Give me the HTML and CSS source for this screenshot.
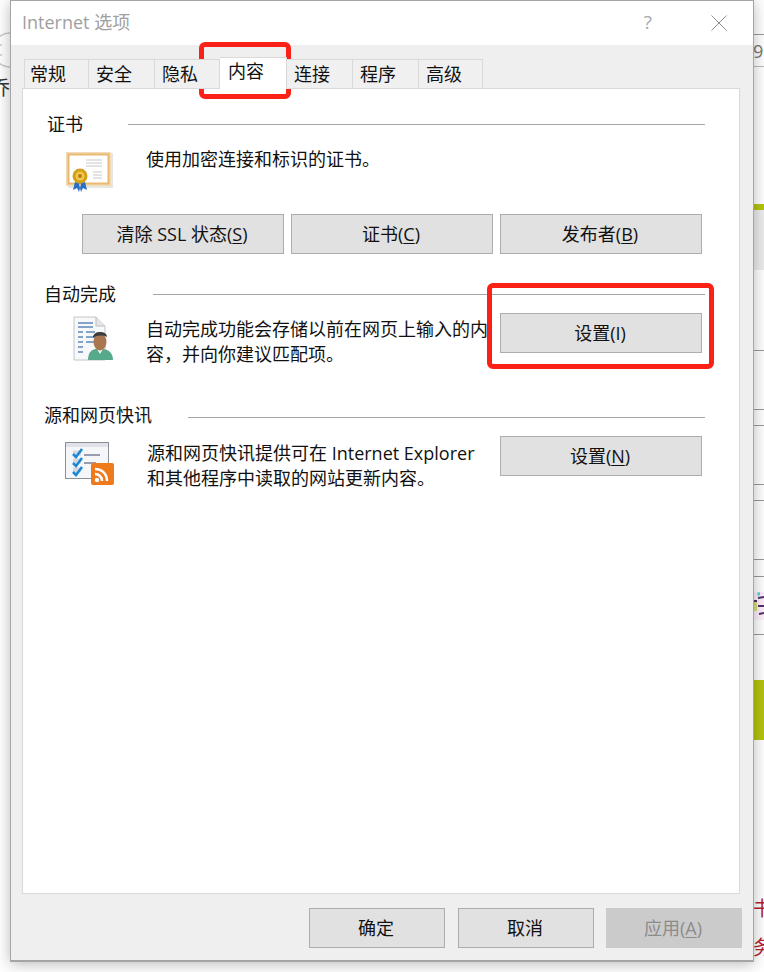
FILE: index.html
```html
<!DOCTYPE html>
<html lang="zh-CN">
<head>
<meta charset="utf-8">
<title>Internet 选项</title>
<link rel="stylesheet" href="styles.css">
</head>
<body>
<div class="desktop">
  <div class="bg-left"><svg class="bg-circle" width="26" height="40" viewBox="0 0 26 40"><circle cx="20" cy="20" r="17" fill="none" stroke="#c9c9c9" stroke-width="1.5"/><path d="M2 15h10M2 25h10" stroke="#c9c9c9" stroke-width="1.5"/></svg><span class="bg-glyph">乔</span></div>
  <span class="bg-num">9</span>
  <div class="bg-rule r1"></div><div class="bg-rule r2"></div>
  <div class="bg-rule r3"></div><div class="bg-rule r4"></div><div class="bg-rule r5"></div><div class="bg-rule r6"></div>
  <div class="bg-rule r7"></div><div class="bg-rule r8"></div><div class="bg-rule r9"></div><div class="bg-rule r10"></div>
  <div class="bg-green g1"></div><div class="bg-green g2"></div><div class="bg-grey"></div>
  <svg class="bg-art" width="10" height="28" viewBox="0 0 10 28"><rect width="10" height="28" fill="#fdf0fa"/><path d="M3 1l3-1v3l-2 1z" fill="#59cfee"/><path d="M0 9h3M4 6l6-1M4 14h6M5 22l5-1" stroke="#55306f" stroke-width="2.200"/><rect y="10" width="3" height="9" fill="#d9de7f"/></svg>
  <span class="bg-red t1">书</span><span class="bg-red t2">务</span>

  <div class="dialog">
    <header class="titlebar">
      <span class="title">Internet 选项</span>
      <span class="help">?</span>
      <svg class="close" width="16" height="16" viewBox="0 0 16 16"><path d="M.5.5l15 15M15.500.5l-15 15" stroke="#8f8f8f" stroke-width="1" fill="none"/></svg>
    </header>
    <div class="body">
      <nav class="tabs">
        <span class="tab w65">常规</span>
        <span class="tab w66">安全</span>
        <span class="tab w65">隐私</span>
        <span class="tab active">内容</span>
        <span class="tab w66">连接</span>
        <span class="tab w66">程序</span>
        <span class="tab w64">高级</span>
      </nav>
      <main class="panel">
        <section class="group g-cert">
          <div class="legend cert-legend"><span class="legend-text">证书</span><span class="legend-line"></span></div>
          <div class="row cert-row">
            <svg class="icon" width="48" height="42" viewBox="0 0 48 42">
              <rect x="3" y="2" width="45" height="35" fill="#d9d6cf" opacity=".6"/>
              <rect x="1" y="1" width="45" height="34" fill="#f1dcb6"/>
              <rect x="3.500" y="3.500" width="40" height="29" fill="#fff" stroke="#e9b871" stroke-width="2"/>
              <path d="M21 9h16M21 12h16M21 15h16M28 21h9M28 24h9M28 27h9" stroke="#c9c9c9" stroke-width="1"/>
              <path d="M10 31l-2 8 4-2 2 4 2-8zM20 31l2 8-4-2-2 4-2-8z" fill="#2a6fc4"/>
              <circle cx="15" cy="25" r="7.500" fill="#d4a017"/>
              <circle cx="15" cy="25" r="4.500" fill="#f2c94c"/>
              <circle cx="15" cy="25" r="2" fill="#b67d10"/>
            </svg>
            <p class="desc one">使用加密连接和标识的证书。</p>
          </div>
          <div class="btn-row">
            <button class="btn wide">清除 SSL 状态(<u>S</u>)</button>
            <button class="btn wide">证书(<u>C</u>)</button>
            <button class="btn wide">发布者(<u>B</u>)</button>
          </div>
        </section>
        <section class="group g-auto">
          <div class="legend"><span class="legend-text">自动完成</span><span class="legend-line"></span></div>
          <div class="row auto-row">
            <svg class="icon" width="42" height="46" viewBox="0 0 42 46">
              <path d="M1 1h22l9 9v34H1z" fill="#f7f8fa" stroke="#c4c4c4"/>
              <path d="M23 1v9h9" fill="#e4e6ea" stroke="#bcbcbc"/>
              <path d="M5 7h15M5 11h15M5 16h5M13 16h9M5 21h5M13 21h12M5 26h5M13 26h8M5 31h5M5 36h5" stroke="#5f86b8" stroke-width="1.300"/>
              <path d="M15 44c0-9 5-11 9-11h5c5 0 11 3 11 11z" fill="#56a98a"/>
              <path d="M24 33l3 5 3-5z" fill="#f4f4f4"/>
              <ellipse cx="27" cy="26" rx="6.500" ry="8.500" fill="#a97650"/>
              <path d="M20 22c0-5 4-6 7-6s7 1 7 5c-4-2-10-2-14 1z" fill="#3c3c3c"/>
            </svg>
            <p class="desc">自动完成功能会存储以前在网页上输入的内容，并向你建议匹配项。</p>
            <button class="btn side">设置(<span class="plain">I</span>)</button>
          </div>
        </section>
        <section class="group g-feed">
          <div class="legend"><span class="legend-text">源和网页快讯</span><span class="legend-line"></span></div>
          <div class="row feed-row">
            <svg class="icon" width="50" height="45" viewBox="0 0 50 45">
              <rect x=".5" y=".5" width="43" height="36" fill="#f4f6f9" stroke="#8b8f96"/>
              <path d="M1 1h42v4H1z" fill="#dfe3e8"/>
              <path d="M8 11h8M8 19h8M8 28h8" stroke="#c2c6cc" stroke-width="5" opacity=".6"/>
              <path d="M8 12l3 3 6-8M8 21l3 3 6-8M8 30l3 3 6-8" stroke="#1c87d6" stroke-width="2.500" fill="none"/>
              <path d="M19 13h16M19 21h12" stroke="#7b7f99" stroke-width="1.600"/>
              <rect x="26" y="21" width="23" height="22" rx="2" fill="#ee7a1b"/>
              <path d="M30 27c7 0 12 5 12 12M30 32c4 0 7 3 7 7" stroke="#fff" stroke-width="2.500" fill="none"/>
              <circle cx="32" cy="38" r="2.200" fill="#fff"/>
            </svg>
            <p class="desc">源和网页快讯提供可在 Internet Explorer 和其他程序中读取的网站更新内容。</p>
            <button class="btn side">设置(<u>N</u>)</button>
          </div>
        </section>
      </main>
      <footer class="footer">
        <button class="btn foot">确定</button>
        <button class="btn foot">取消</button>
        <button class="btn foot disabled">应用(<u>A</u>)</button>
      </footer>
    </div>
  </div>

  <div class="mark mark-tab"></div>
  <div class="mark mark-btn"></div>
</div>
</body>
</html>
```

FILE: styles.css
```css
* { box-sizing: border-box; }
html, body { margin: 0; padding: 0; }
body {
  width: 764px;
  height: 972px;
  overflow: hidden;
  background: #fff;
  font-family: "Open Sans", "Noto Sans CJK SC", sans-serif;
  color: #111;
}
.desktop { position: relative; width: 764px; height: 972px; overflow: hidden; background: #fff; }

/* Page visible behind the dialog */
.bg-left { position: absolute; left: 0; top: 0; width: 10px; height: 100px; overflow: hidden; }
.bg-circle { position: absolute; left: -10px; top: 30px; }
.bg-glyph { position: absolute; left: -9px; top: 76px; font-size: 19px; line-height: 24px; color: #333; }
.bg-num { position: absolute; left: 753px; top: 39px; font-size: 18px; line-height: 24px; color: #777; }
.bg-rule { position: absolute; left: 754px; width: 10px; height: 1px; background: #9a9a9a; }
.r1 { top: 34px; } .r2 { top: 66px; background: #bbb; }
.r3 { top: 350px; } .r4 { top: 409px; } .r5 { top: 425px; } .r6 { top: 484px; }
.r7 { top: 500px; } .r8 { top: 559px; } .r9 { top: 576px; } .r10 { top: 634px; }
.bg-green { position: absolute; left: 754px; width: 10px; background: #b5c40f; }
.g1 { top: 204px; height: 6px; }
.g2 { top: 680px; height: 60px; }
.bg-grey { position: absolute; left: 754px; top: 210px; width: 10px; height: 60px; background: #ececec; }
.bg-art { position: absolute; left: 754px; top: 592px; }
.bg-red { position: absolute; left: 753px; font-size: 20px; line-height: 24px; color: #b5202e; }
.t1 { top: 897px; } .t2 { top: 936px; }

/* Dialog */
.dialog {
  position: absolute;
  left: 10px;
  top: 0;
  width: 744px;
  height: 962px;
  display: flex;
  flex-direction: column;
  background: #efefef;
  border: 1px solid #a5a5a5;
  border-bottom-width: 2px;
  box-shadow: 0 2px 14px rgba(0, 0, 0, .28);
}
.titlebar {
  flex: none;
  height: 44px;
  display: flex;
  align-items: center;
  padding: 0 26px 0 11px;
  background: #fff;
}
.title { flex: 1; font-size: 18px; line-height: 24px; color: #a0a0a0; margin-top: -3px; }
.help { font-size: 19px; line-height: 24px; color: #a8a8a8; margin-right: 59px; margin-top: -3px; }
.close { margin-top: -1px; }

.body { flex: 1; display: flex; flex-direction: column; padding: 0 13px 0 11px; }
.tabs { flex: none; display: flex; align-items: flex-end; height: 44px; padding-left: 2px; position: relative; z-index: 1; margin-bottom: -1px; }
.tab {
  height: 30px;
  padding-left: 7px;
  font-size: 18px;
  line-height: 28px;
  color: #111;
  background: #f0f0f0;
  border: 1px solid #d9d9d9;
  border-left-width: 0;
}
.tabs .tab:first-child { border-left-width: 1px; padding-left: 5px; }
.w64 { width: 64px; } .w65 { width: 65px; } .w66 { width: 66px; }
.tab.active {
  width: 67px;
  height: 32px;
  padding-left: 8px;
  background: #fff;
  border-bottom-color: #fff;
  line-height: 26px;
}

.panel {
  flex: none;
  height: 806px;
  padding: 0 34px 0 22px;
  background: #fff;
  border: 1px solid #d9d9d9;
}
.group { display: flex; flex-direction: column; }
.legend { display: flex; align-items: center; height: 24px; }
.legend-text { font-size: 18px; line-height: 24px; color: #111; margin-left: -1px; }
.cert-legend { padding-left: 3px; }
.cert-legend .legend-text { margin-right: 45px; }
.g-auto .legend-text { margin-right: 37px; }
.g-feed .legend-text { margin-right: 36px; margin-top: -4px; }
.legend-line { flex: 1; height: 1px; background: #a5a5a5; }
.g-cert { padding-top: 23px; }
.g-auto { margin-top: 28px; }
.g-feed { margin-top: 27px; }

.row { display: flex; align-items: flex-start; }
.icon { flex: none; display: block; }
.desc { flex: none; width: 345px; margin: 0; font-size: 18px; line-height: 25px; color: #111; }
.cert-row { padding: 15px 0 0 20px; height: 78px; }
.cert-row .desc { margin-left: 33px; margin-top: -4px; }
.btn-row { display: flex; gap: 7px; padding-left: 37px; margin-right: -3px; }

.btn {
  height: 40px;
  padding: 0 2px 2px 0;
  font-family: inherit;
  font-size: 18px;
  color: #111;
  background: #e1e1e1;
  border: 1px solid #adadad;
  border-radius: 0;
}
.btn u { text-underline-offset: 2px; }
.wide { width: 202px; }
.side { flex: none; width: 202px; margin: 0 -3px 0 8px; }
.plain { text-decoration: none; }

.auto-row { padding: 7px 0 0 28px; height: 72px; }
.auto-row .icon { margin-top: 3px; }
.auto-row .desc { margin-left: 31px; margin-top: 4px; margin-right: 1px; }
.feed-row { padding: 7px 0 0 20px; height: 80px; }
.feed-row .icon { margin-top: 6px; }
.feed-row .desc { margin-left: 32px; margin-top: 5px; }

.footer { flex: 1; display: flex; justify-content: flex-end; gap: 13px; padding-top: 14px; margin-right: -2px; }
.foot { width: 136px; }
.foot + .foot + .foot { margin-left: -1px; }
.disabled { background: #cbcbcb; border-color: #cbcbcb; color: #8c8c8c; }

/* Red annotation frames */
.mark { position: absolute; border: 5px solid #fb2116; border-radius: 6px; }
.mark-tab { left: 199px; top: 42px; width: 92px; height: 57px; }
.mark-btn { left: 487px; top: 283px; width: 227px; height: 86px; }
```
